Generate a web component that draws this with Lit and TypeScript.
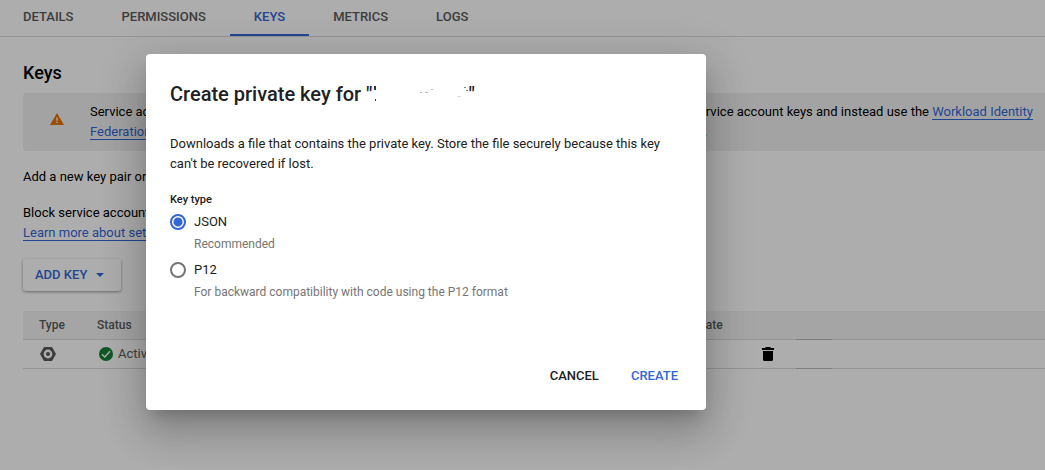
import { LitElement, html, css, svg } from "lit";
import { customElement, state } from "lit/decorators.js";

const TABS = ["Details", "Permissions", "Keys", "Metrics", "Logs"];

const KEY_TYPES = [
  { id: "json", label: "JSON", hint: "Recommended" },
  { id: "p12", label: "P12", hint: "For backward compatibility with code using the P12 format" },
];

const warningIcon = html`<svg class="warning" viewBox="0 0 14 12" width="14" height="12" aria-hidden="true">
  <path fill="#e37400" d="M7 0 14 12H0Z" />
  <path fill="#fff" d="M6.3 4.5h1.4v3.3H6.3zM6.3 8.7h1.4v1.4H6.3z" />
</svg>`;

const keyIcon = html`<svg viewBox="-1 0 17 14" width="17" height="14" aria-hidden="true">
  <path fill="#5b5b5b" fill-rule="evenodd"
    d="M4 0h8l4 7-4 7H4L0 7zM8 2.6a4.4 4.4 0 1 0 0 8.8 4.4 4.4 0 0 0 0-8.8z" />
  <circle cx="8" cy="7" r="2" fill="#5b5b5b" />
</svg>`;

const activeIcon = html`<svg viewBox="0 0 14 14" width="14" height="14" aria-hidden="true">
  <circle cx="7" cy="7" r="7" fill="#188038" />
  <path fill="none" stroke="#fff" stroke-width="1.4" d="M3 7.2 5.7 9.9 11 4.3" />
</svg>`;

const trashIcon = html`<svg viewBox="0 0 12 14" width="12" height="14" aria-hidden="true">
  <path fill="#000" d="M0 1h3l1-1h4l1 1h3v2H0zM1 4h10v8.5a1.5 1.5 0 0 1-1.5 1.5h-7A1.5 1.5 0 0 1 1 12.5z" />
</svg>`;

const maskedName = html`<svg class="masked" viewBox="0 0 96 20" width="96" height="20" aria-hidden="true">
  ${svg`<path fill="#333" d="M1 2h2v4H1zM2 15h1v2H2z" />
  <path fill="#bbb" d="M47 8h2v1h-2zM52 8h3v1h-3zM58 5h2v1h-2z" />
  <path fill="#ddd" d="M84 12h4v1h-4z" />
  <path fill="#888" d="M91 3h2v1h-2zM93 6h2v1h-2z" />`}
</svg>`;

@customElement("app-root")
export class AppRoot extends LitElement {
  @state() private keyType = "json";

  static styles = css`
    :host {
      display: block;
      position: relative;
      min-height: 100vh;
      overflow: hidden;
      box-sizing: border-box;
      background: #fff;
      color: #000;
      font: 400 13px/20px Roboto, sans-serif;
    }
    *, *::before, *::after { box-sizing: border-box; }
    button { font: inherit; cursor: pointer; }
    a { color: #3367d6; text-decoration: none; border-bottom: 1px solid #3367d6; }
    p, h1, h2 { margin: 0; }
    svg { display: block; }

    .tabs { display: flex; border-bottom: 1px solid #dadada; }
    .tab {
      height: 36px;
      padding: 0 24px;
      border: 0;
      border-bottom: 2px solid transparent;
      background: none;
      color: #5b5b5b;
      font-size: 13px;
      font-weight: 500;
      text-transform: uppercase;
    }
    .tab:first-child { padding-left: 23px; }
    .tab.selected { color: #3367d6; border-color: #3367d6; }

    .content { padding: 24px 0 0 23px; }
    .title { font-size: 18px; line-height: 24px; font-weight: 500; }
    .banner {
      display: flex;
      align-items: flex-start;
      gap: 26px;
      margin-top: 8px;
      padding: 9px 8px 9px 27px;
      border-radius: 4px 0 0 4px;
      background: #f1f1f1;
    }
    .warning { flex: none; margin-top: 11px; }
    .text { margin-top: 16px; }
    .add {
      display: flex;
      align-items: center;
      gap: 8px;
      height: 32px;
      margin-top: 16px;
      padding: 0 16px 0 12px;
      border: 0;
      border-radius: 3px;
      background: #fff;
      color: #3367d6;
      font-weight: 500;
      box-shadow: 0 1px 3px rgba(0, 0, 0, 0.4);
    }

    .keys {
      width: 100%;
      margin-top: 20px;
      border-collapse: separate;
      border-spacing: 0;
      table-layout: fixed;
      font-size: 12px;
      color: #5b5b5b;
    }
    .keys th, .keys td {
      height: 29px;
      padding: 0 16px;
      border-bottom: 1px solid #dadada;
      text-align: left;
      white-space: nowrap;
    }
    .keys th { background: #f4f4f4; font-weight: 500; }
    .keys .spacer { border-color: #bababa; }
    .type { width: 58px; }
    .status { width: 114px; }
    .key { width: 229px; }
    .created { width: 180px; }
    .expires { width: 142px; }
    .remove { width: 50px; }
    .gap { width: 36px; }
    .state { display: flex; align-items: center; gap: 5px; padding-left: 2px; font-size: 13px; }
    .delete { display: block; padding: 0; border: 0; background: none; }

    .scrim {
      position: absolute;
      inset: 0;
      display: flex;
      justify-content: center;
      align-items: flex-start;
      padding: 54px 193px 0 0;
      background: rgba(0, 0, 0, 0.32);
    }
    .dialog {
      width: 560px;
      max-width: 100%;
      padding: 24px 24px 16px;
      border-radius: 4px;
      background: #fff;
      box-shadow:
        0 11px 15px -7px rgba(0, 0, 0, 0.2),
        0 24px 38px 3px rgba(0, 0, 0, 0.14),
        0 9px 46px 8px rgba(0, 0, 0, 0.12);
    }
    .heading {
      display: flex;
      align-items: center;
      color: #212121;
      font-size: 20px;
      line-height: 32px;
      font-weight: 500;
    }
    .lead { margin-top: 24px; color: #212121; }
    .choices { margin: 16px 0 0; padding: 0; border: 0; }
    .legend { padding: 0; font-size: 11px; line-height: 20px; font-weight: 500; color: #212121; }
    .choice {
      display: grid;
      grid-template-columns: 16px 1fr;
      column-gap: 8px;
      align-items: center;
      margin-bottom: 4px;
    }
    .choice label { line-height: 24px; color: #212121; }
    .hint { grid-column: 2; font-size: 12px; color: #757575; }
    .radio {
      appearance: none;
      width: 16px;
      height: 16px;
      margin: 0;
      border: 2px solid #757575;
      border-radius: 50%;
      background: #fff;
    }
    .radio:checked {
      border-color: #3367d6;
      background: radial-gradient(circle, #3367d6 4px, #fff 5px);
    }
    .actions { display: flex; justify-content: flex-end; gap: 16px; margin-top: 52px; }
    .action {
      height: 36px;
      padding: 0 8px;
      border: 0;
      background: none;
      color: #212121;
      font-weight: 500;
    }
    .action.primary { color: #3367d6; padding-right: 4px; }
  `;

  render() {
    return html`
      <nav class="tabs" role="tablist">
        ${TABS.map(
          (tab) => html`<button
            class="tab ${tab === "Keys" ? "selected" : ""}"
            role="tab"
            aria-selected=${tab === "Keys"}
          >${tab}</button>`
        )}
      </nav>
      <main class="content">
        <h1 class="title">Keys</h1>
        <div class="banner">
          ${warningIcon}
          <p>
            Service account keys could pose a security risk if compromised. We recommend you avoid downloading service account keys and instead use the
            <a href="#">Workload Identity Federation</a>. You can learn more about the best way to authenticate service accounts on Google Cloud:
            <a href="#">here</a>.
          </p>
        </div>
        <p class="text">Add a new key pair or upload a public key certificate from an existing key pair.</p>
        <p class="text">
          Block service account key creation using organization policies.<br />
          <a href="#">Learn more about setting organization policies for service accounts</a>
        </p>
        <button class="add">
          ADD KEY
          <svg viewBox="-1 0 10 4" width="10" height="4" aria-hidden="true"><path fill="#3367d6" d="M0 0h8L4 4z" /></svg>
        </button>
        <table class="keys">
          <thead>
            <tr>
              <th class="type">Type</th>
              <th class="status">Status</th>
              <th class="key">Key</th>
              <th class="created">Key creation date</th>
              <th class="expires">Key expiration date</th>
              <th class="remove"></th>
              <th class="gap spacer"></th>
              <th class="rest"></th>
            </tr>
          </thead>
          <tbody>
            <tr>
              <td>${keyIcon}</td>
              <td><span class="state">${activeIcon}Active</span></td>
              <td></td>
              <td></td>
              <td></td>
              <td><button class="delete" aria-label="Delete key">${trashIcon}</button></td>
              <td class="spacer"></td>
              <td></td>
            </tr>
          </tbody>
        </table>
      </main>
      <div class="scrim">
        <form class="dialog" role="dialog" aria-labelledby="heading" @submit=${(e: Event) => e.preventDefault()}>
          <h2 class="heading" id="heading">Create private key for "${maskedName}"</h2>
          <p class="lead">
            Downloads a file that contains the private key. Store the file securely because this key can't be recovered if lost.
          </p>
          <fieldset class="choices">
            <legend class="legend">Key type</legend>
            ${KEY_TYPES.map(
              (t) => html`<div class="choice">
                <input
                  class="radio"
                  type="radio"
                  name="key-type"
                  id=${t.id}
                  aria-describedby="${t.id}-hint"
                  .checked=${this.keyType === t.id}
                  @change=${() => (this.keyType = t.id)}
                />
                <label for=${t.id}>${t.label}</label>
                <span class="hint" id="${t.id}-hint">${t.hint}</span>
              </div>`
            )}
          </fieldset>
          <div class="actions">
            <button class="action" type="button">CANCEL</button>
            <button class="action primary" type="submit">CREATE</button>
          </div>
        </form>
      </div>
    `;
  }
}
